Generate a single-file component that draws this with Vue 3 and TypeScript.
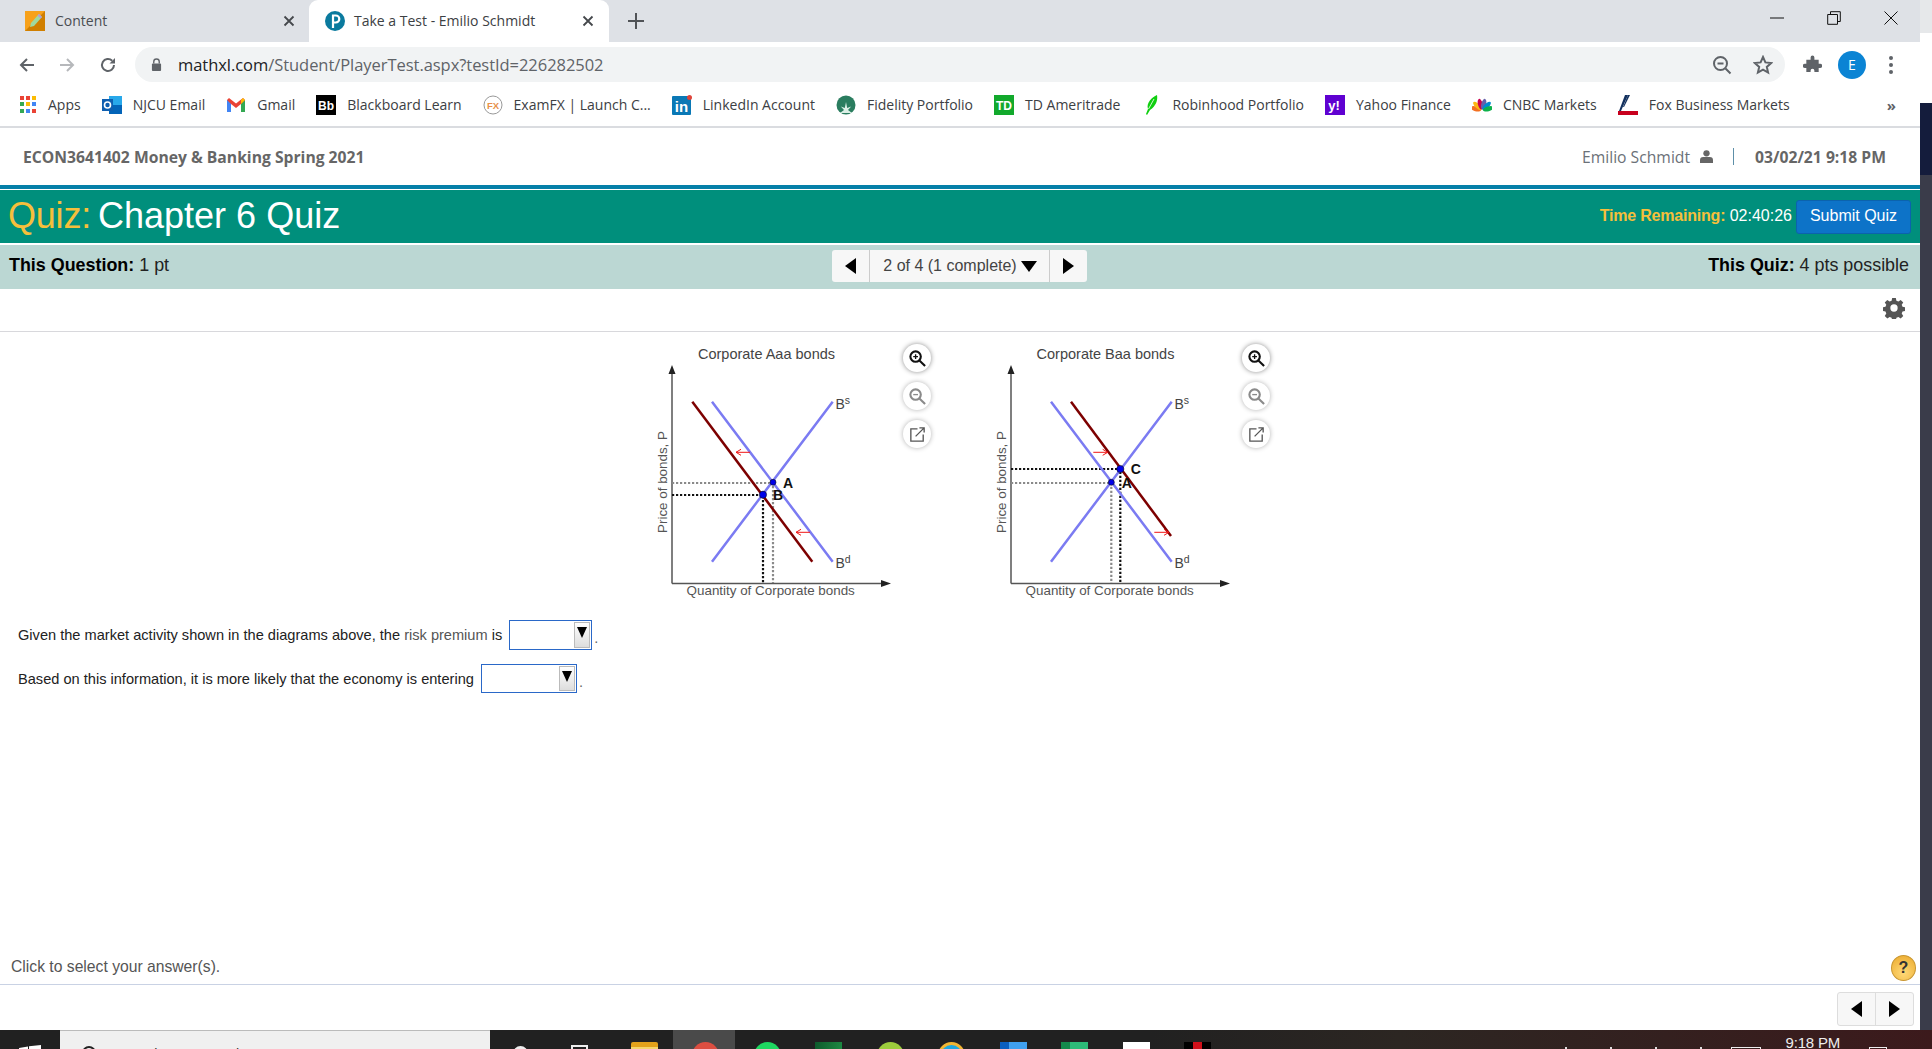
<script setup lang="ts">
interface Bookmark { name: string; icon: string }
interface Dot { x: number; y: number; r: number; label: string; lx: number; ly: number }
interface Chart {
  title: string
  red: number[]
  dots: Dot[]
  arrows: number[][]
  grayY: number
  grayX: number
  blackY: number
  blackX: number
}

const bookmarks: Bookmark[] = [
  { name: 'Apps', icon: 'apps' },
  { name: 'NJCU Email', icon: 'outlook' },
  { name: 'Gmail', icon: 'gmail' },
  { name: 'Blackboard Learn', icon: 'bb' },
  { name: 'ExamFX | Launch C...', icon: 'fx' },
  { name: 'LinkedIn Account', icon: 'in' },
  { name: 'Fidelity Portfolio', icon: 'fidelity' },
  { name: 'TD Ameritrade', icon: 'td' },
  { name: 'Robinhood Portfolio', icon: 'robin' },
  { name: 'Yahoo Finance', icon: 'yahoo' },
  { name: 'CNBC Markets', icon: 'cnbc' },
  { name: 'Fox Business Markets', icon: 'fox' },
]

const appColors = ['#ea4335', '#ea4335', '#fbbc05', '#34a853', '#fbbc05', '#4285f4', '#34a853', '#4285f4', '#ea4335']

const petals = [
  { color: '#f37021', angle: -75 },
  { color: '#fcb711', angle: -45 },
  { color: '#cc004c', angle: -15 },
  { color: '#6460aa', angle: 15 },
  { color: '#0089d0', angle: 45 },
  { color: '#0db14b', angle: 75 },
]

const charts: Chart[] = [
  {
    title: 'Corporate Aaa bonds',
    red: [52.3, 69.7, 172.3, 229.7],
    dots: [
      { x: 133, y: 150.3, r: 3, label: 'A', lx: 148, ly: 156 },
      { x: 123, y: 162.7, r: 3.6, label: 'B', lx: 138, ly: 168 },
    ],
    arrows: [[110, 120.3, 96, 120.3], [170, 200.3, 156, 200.3]],
    grayY: 151,
    grayX: 133,
    blackY: 163,
    blackX: 123,
  },
  {
    title: 'Corporate Baa bonds',
    red: [92, 69.7, 192, 204],
    dots: [
      { x: 132.3, y: 150.3, r: 3, label: 'A', lx: 147.7, ly: 156 },
      { x: 141.3, y: 137, r: 3.6, label: 'C', lx: 156.7, ly: 142 },
    ],
    arrows: [[114.3, 120.3, 128.7, 120.3], [175.3, 200.3, 190, 200.3]],
    grayY: 151,
    grayX: 132.3,
    blackY: 137,
    blackX: 141.3,
  },
]

const questions = [
  { before: 'Given the market activity shown in the diagrams above, the ', term: 'risk premium', after: ' is', cls: 'first' },
  { before: 'Based on this information, it is more likely that the economy is entering', term: '', after: '', cls: 'second' },
]

const taskIcons = ['folder', 'chrome', 'spotify', 'excel', 'lime', 'ie', 'mail', 'sheet', 'steam', 'netflix']
</script>

<template>
  <div class="screen">
    <div class="window">
      <div class="tabstrip">
        <div class="tab">
          <svg class="favicon" viewBox="0 0 20 20">
            <rect width="20" height="20" fill="#f7a11a" />
            <path d="M0 20 20 0v20z" fill="#d07f00" />
            <path d="M5 16l1-4L14 3l3 3-8 9z" fill="#9fd9a0" />
            <path d="M14 3l3 3-1.5 1.6-3-3z" fill="#b79bd6" />
          </svg>
          <span class="tab-title">Content</span>
          <svg class="tab-x" viewBox="0 0 12 12"><path d="M1.5 1.5l9 9M10.500 1.500l-9 9" /></svg>
        </div>
        <div class="tab active">
          <svg class="favicon round" viewBox="0 0 20 20">
            <circle cx="10" cy="10" r="10" fill="#0a7a9e" />
            <path d="M8 17V4.500h2.800a3.500 3.500 0 0 1 0 7H8" fill="none" stroke="#fff" stroke-width="2.200" />
          </svg>
          <span class="tab-title">Take a Test - Emilio Schmidt</span>
          <svg class="tab-x" viewBox="0 0 12 12"><path d="M1.5 1.5l9 9M10.500 1.500l-9 9" /></svg>
        </div>
        <svg class="new-tab" viewBox="0 0 16 16"><path d="M8 0v16M0 8h16" /></svg>
        <div class="win-controls">
          <svg viewBox="0 0 14 14"><path d="M0 7h14" /></svg>
          <svg viewBox="0 0 14 14"><path d="M3.500 3V.7h9.800v9.800H11M.7 3.500h9.800v9.800H.7z" /></svg>
          <svg viewBox="0 0 14 14"><path d="M.5.500l13 13M13.500.5l-13 13" /></svg>
        </div>
      </div>

      <div class="toolbar">
        <svg class="tool back" viewBox="0 0 16 16"><path d="M15 8H2M8 2 2 8l6 6" /></svg>
        <svg class="tool fwd" viewBox="0 0 16 16"><path d="M1 8h13M8 2l6 6-6 6" /></svg>
        <svg class="tool reload" viewBox="0 0 16 16"><path d="M14 8a6 6 0 1 1-1.800-4.300" /><path class="solid" d="M15 1v5.500H9.500z" /></svg>
        <div class="omnibox">
          <svg class="lock" viewBox="0 0 12 14">
            <path d="M3 6V4a3 3 0 0 1 6 0v2" fill="none" stroke="#5f6368" stroke-width="1.500" />
            <rect x="1" y="6" width="10" height="8" rx="1" fill="#5f6368" />
          </svg>
          <span class="url"><b>mathxl.com</b>/Student/PlayerTest.aspx?testId=226282502</span>
          <svg class="omni-icon" viewBox="0 0 20 20">
            <circle cx="8.500" cy="8.500" r="6.500" /><path d="M5.500 8.500h6M13.500 13.500l5 5" />
          </svg>
          <svg class="omni-icon star" viewBox="0 0 20 20">
            <path d="M10 2l2.400 5.400 5.800.6-4.400 3.900 1.300 5.700L10 14.700l-5.100 2.900 1.300-5.700L1.800 8l5.800-.6z" />
          </svg>
        </div>
        <svg class="puzzle" viewBox="0 0 20 20">
          <path d="M8 2.500a2 2 0 0 1 4 0V5h4.500v4.200H18a2.200 2.200 0 0 1 0 4.400h-1.500V18H12v-1.500a2 2 0 0 0-4 0V18H3.500v-4.400H2a2.200 2.200 0 0 1 0-4.400h1.500V5H8z" fill="#5f6368" />
        </svg>
        <div class="avatar">E</div>
        <div class="kebab"><i /><i /><i /></div>
      </div>

      <div class="bookmarks">
        <div v-for="b in bookmarks" :key="b.name" class="bookmark">
          <div v-if="b.icon === 'apps'" class="apps-grid"><i v-for="(c, i) in appColors" :key="i" :style="{ background: c }" /></div>
          <svg v-else class="bm-icon" viewBox="0 0 20 20">
            <template v-if="b.icon === 'outlook'">
              <rect x="7" y="1" width="13" height="18" fill="#28a8ea" />
              <rect x="7" y="10" width="13" height="9" fill="#0364b8" />
              <rect x="0" y="4" width="11" height="12" fill="#0f5fb0" />
              <circle cx="5.500" cy="10" r="3" fill="none" stroke="#fff" stroke-width="1.600" />
            </template>
            <template v-else-if="b.icon === 'gmail'">
              <path d="M1 5v12h4V9l5 4 5-4v8h4V5l-2-2-7 5.500L3 3z" fill="#ea4335" />
              <path d="M1 5v12h4V9z" fill="#4285f4" />
              <path d="M19 5v12h-4V9z" fill="#34a853" />
              <path d="M15 9V5l2-2 2 2z" fill="#fbbc05" />
            </template>
            <template v-else-if="b.icon === 'bb'">
              <rect width="20" height="20" fill="#000" />
              <text x="10" y="14.500" class="fav-text" fill="#fff" font-size="12">Bb</text>
            </template>
            <template v-else-if="b.icon === 'fx'">
              <circle cx="10" cy="10" r="9" fill="#fff" stroke="#999" />
              <text x="10" y="13.500" class="fav-text" fill="#e8914a" font-size="9.500">FX</text>
            </template>
            <template v-else-if="b.icon === 'in'">
              <rect y="1" width="19" height="19" rx="1" fill="#0a78b5" />
              <text x="9.500" y="16.500" class="fav-text" fill="#fff" font-size="15">in</text>
              <circle cx="17.500" cy="2.500" r="2.500" fill="#e0443a" />
            </template>
            <template v-else-if="b.icon === 'fidelity'">
              <circle cx="10" cy="10" r="9.500" fill="#2a7d5f" />
              <path d="M10 7l1.200 6 4-1.500L12 15l4 3H4l4-3-3.200-3.500 4 1.500z" fill="#dcefe6" />
            </template>
            <template v-else-if="b.icon === 'td'">
              <rect width="20" height="20" fill="#12a92c" />
              <text x="10" y="14.500" class="fav-text" fill="#fff" font-size="12">TD</text>
            </template>
            <template v-else-if="b.icon === 'robin'">
              <path d="M16 0c1 5-1 11-7 15l-3 5-1-1 2-5C5 8 11 2 16 0z" fill="#10cf10" />
              <path d="M13 4 7.500 14" stroke="#fff" stroke-width=".8" />
            </template>
            <template v-else-if="b.icon === 'yahoo'">
              <rect width="20" height="20" fill="#5f01d1" />
              <text x="9" y="15" class="fav-text" fill="#fff" font-size="13">y!</text>
            </template>
            <template v-else-if="b.icon === 'cnbc'">
              <ellipse
                v-for="p in petals"
                :key="p.color"
                cx="10"
                cy="9"
                rx="2.400"
                ry="5.500"
                :fill="p.color"
                :transform="`rotate(${p.angle} 10 15.500)`"
              />
            </template>
            <template v-else>
              <path d="M1 16 7 0h3L3 16z" fill="#12305e" />
              <path d="M5 12 10 0h2L6 12z" fill="#12305e" />
              <rect y="16" width="20" height="4" fill="#c8001e" />
            </template>
          </svg>
          <span>{{ b.name }}</span>
        </div>
        <span class="more">»</span>
      </div>

      <div class="course">
        <span class="course-name">ECON3641402 Money &amp; Banking Spring 2021</span>
        <div class="user">
          <span class="user-name">Emilio Schmidt</span>
          <svg class="person" viewBox="0 0 14 14">
            <circle cx="7" cy="3.600" r="3.400" />
            <path d="M0 14v-3a3.500 3.500 0 0 1 3.500-3.500h7A3.500 3.500 0 0 1 14 11v3z" />
          </svg>
          <span class="sep" />
          <b class="stamp">03/02/21 9:18 PM</b>
        </div>
      </div>

      <div class="blue-rule" />
      <div class="quiz-bar">
        <h1><span>Quiz:</span> Chapter 6 Quiz</h1>
        <div class="timer">
          <span class="remaining"><b>Time Remaining:</b> 02:40:26</span>
          <button class="submit">Submit Quiz</button>
        </div>
      </div>

      <div class="info-bar">
        <div class="info-left"><b>This Question:</b> 1 pt</div>
        <div class="pager">
          <div class="pager-btn"><i class="tri left" /></div>
          <div class="pager-mid">2 of 4 (1 complete) <i class="tri down" /></div>
          <div class="pager-btn"><i class="tri right" /></div>
        </div>
        <div class="info-right"><b>This Quiz:</b> 4 pts possible</div>
      </div>

      <div class="gear-row">
        <svg class="gear" viewBox="0 0 24 24">
          <path d="M10 1h4l.6 3 2.200.9 2.500-1.700 2.800 2.800-1.700 2.500.9 2.200 3 .6v4l-3 .6-.9 2.200 1.700 2.500-2.800 2.800-2.500-1.700-2.200.9-.6 3h-4l-.6-3-2.200-.9-2.500 1.700-2.800-2.800 1.700-2.500-.9-2.200-3-.6v-4l3-.6.9-2.200-1.700-2.500 2.800-2.800 2.500 1.700 2.200-.9zM12 8a4 4 0 1 0 0 8 4 4 0 0 0 0-8z" fill="#555" fill-rule="evenodd" />
        </svg>
      </div>

      <div class="content">
        <div class="figures">
          <div v-for="c in charts" :key="c.title" class="figure">
            <svg class="chart" viewBox="0 0 255 270" width="255" height="270">
              <text x="126.500" y="27.300" class="title">{{ c.title }}</text>
              <path d="M32 251.500V36M32 251.500H247" class="axis" />
              <path d="M32 33l-3.500 9h7zM251 251.500l-10-3.500v7z" fill="#222" />
              <path :d="`M32 ${c.grayY}H${c.grayX}V251`" class="dots gray" />
              <path :d="`M32 ${c.blackY}H${c.blackX}V251`" class="dots black" />
              <path d="M72 69.700 192.700 229.700M72 229.700 192.700 69.700" class="curve blue" />
              <line :x1="c.red[0]" :y1="c.red[1]" :x2="c.red[2]" :y2="c.red[3]" class="curve red" />
              <g v-for="(a, i) in c.arrows" :key="i" class="shift">
                <line :x1="a[0]" :y1="a[1]" :x2="a[2]" :y2="a[3]" />
                <path :d="`M${a[2] + (a[2] > a[0] ? -5 : 5)} ${a[3] - 3}L${a[2]} ${a[3]}L${a[2] + (a[2] > a[0] ? -5 : 5)} ${a[3] + 3}`" />
              </g>
              <g v-for="d in c.dots" :key="d.label">
                <circle :cx="d.x" :cy="d.y" :r="d.r" class="dot" />
                <text :x="d.lx" :y="d.ly" class="pt-label">{{ d.label }}</text>
              </g>
              <text x="195.500" y="77" class="curve-label">B<tspan dy="-5" font-size="10.500">s</tspan></text>
              <text x="195.500" y="236" class="curve-label">B<tspan dy="-5" font-size="10.500">d</tspan></text>
              <text x="130.700" y="263" class="axis-label">Quantity of Corporate bonds</text>
              <text transform="translate(26.500 150) rotate(-90)" class="axis-label">Price of bonds, P</text>
            </svg>
            <div class="tools">
              <button class="round-btn">
                <svg viewBox="0 0 20 20"><circle cx="8" cy="8" r="5.500" /><path d="M12 12l6 6" /><path class="thin" d="M5.500 8h5M8 5.500v5" /></svg>
              </button>
              <button class="round-btn muted">
                <svg viewBox="0 0 20 20"><circle cx="8" cy="8" r="5.500" /><path d="M12 12l6 6" /><path class="thin" d="M5.500 8h5" /></svg>
              </button>
              <button class="round-btn muted dark">
                <svg viewBox="0 0 20 20"><path class="thin" d="M10 4H3v13h13v-7" /><path class="thin" d="M8 12 17 3M12 3h5v5" /></svg>
              </button>
            </div>
          </div>
        </div>

        <p v-for="q in questions" :key="q.cls" class="question" :class="q.cls">
          {{ q.before }}<span v-if="q.term" class="term">{{ q.term }}</span>{{ q.after }}
          <span class="combo"><span class="combo-btn"><i class="tri small" /></span></span><span class="period">.</span>
        </p>
      </div>

      <div class="status">
        <span>Click to select your answer(s).</span>
        <div class="help">?</div>
      </div>
      <div class="foot">
        <div class="foot-nav">
          <div><i class="tri left" /></div>
          <div><i class="tri right" /></div>
        </div>
      </div>
    </div>

    <div class="desktop-edge"><i class="edge-strip" /><i class="edge-top" /><i class="edge-navy" /></div>

    <div class="taskbar">
      <div class="start"><svg viewBox="0 0 22 22"><path d="M0 3l9-1.500V10H0zM10 1.300 22 0v10H10z" fill="#fff" /></svg></div>
      <div class="search-box"><i class="search-ring" /><span>Type here to search</span></div>
      <div class="task-cortana"><i /></div>
      <div class="task-view"><i /></div>
      <div v-for="t in taskIcons" :key="t" class="task" :class="t"><i /></div>
      <div class="tray">
        <i class="tray-mark" /><i class="tray-mark" /><i class="tray-mark" /><i class="tray-mark" />
        <i class="tray-box" />
        <span class="clock">9:18 PM</span>
        <i class="tray-note" />
      </div>
    </div>
  </div>
</template>

<style>
html, body { margin: 0; background: #fff; overflow: hidden; }
</style>

<style scoped>
* { box-sizing: border-box; }
.screen {
  width: 1932px;
  height: 1049px;
  display: grid;
  grid-template-columns: 1920px 12px;
  grid-template-rows: 1030px 19px;
  overflow: hidden;
  font-family: "Liberation Sans", Arial, sans-serif;
  background: #fff;
}
.window { display: flex; flex-direction: column; height: 1030px; overflow: hidden; background: #fff; }

/* tabs */
.tabstrip { display: flex; align-items: stretch; height: 42px; background: #dee1e6; flex: none; }
.tab { width: 284px; margin-left: 25px; display: flex; align-items: center; font: 14px "Open Sans", sans-serif; color: #4a4d51; padding-bottom: 1px; }
.tab.active { width: 300px; margin-left: 0; background: #fff; border-radius: 9px 9px 0 0; padding-left: 16px; color: #3c4043; }
.favicon { width: 20px; height: 20px; flex: none; margin-right: 10px; }
.favicon.round { margin-right: 9px; }
.tab-title { flex: 1; white-space: nowrap; }
.tab-x { width: 12px; height: 12px; fill: none; stroke: #45484c; stroke-width: 1.800; margin-right: 14px; }
.tab.active .tab-x { margin-right: 15px; }
.new-tab { width: 16px; height: 16px; align-self: center; margin-left: 19px; stroke: #505357; stroke-width: 2; fill: none; }
.win-controls { margin-left: auto; display: flex; align-items: flex-start; gap: 43px; padding: 11px 22px 0 0; }
.win-controls svg { width: 14px; height: 14px; fill: none; stroke: #111; stroke-width: 1; }

/* toolbar */
.toolbar { display: flex; align-items: center; height: 45px; padding-left: 19px; flex: none; background: #fff; }
.tool { width: 16px; height: 16px; fill: none; stroke: #5f6368; stroke-width: 2; margin-right: 24px; flex: none; }
.tool.fwd { stroke: #b6b8bb; margin-right: 25px; }
.tool .solid { fill: #5f6368; stroke: none; }
.tool.reload { margin-right: 19px; }
.omnibox { width: 1650px; height: 35px; background: #f1f3f4; border-radius: 18px; display: flex; align-items: center; padding-left: 16px; flex: none; }
.lock { width: 11px; height: 13px; margin-right: 16px; flex: none; }
.url { font: 16.500px "Open Sans", sans-serif; color: #5f6368; flex: 1; white-space: nowrap; letter-spacing: -.05px; }
.url b { font-weight: 400; color: #202124; }
.omni-icon { width: 20px; height: 20px; fill: none; stroke: #5f6368; stroke-width: 2; flex: none; margin-right: 21px; }
.omni-icon.star { margin-right: 12px; }
.puzzle { width: 19px; height: 19px; margin-left: 18px; flex: none; }
.avatar { width: 28px; height: 28px; border-radius: 50%; background: #0b84d4; color: #fff; font: 14px "Open Sans", sans-serif; display: flex; align-items: center; justify-content: center; margin-left: 16px; flex: none; }
.kebab { display: flex; flex-direction: column; gap: 3px; margin-left: 23px; }
.kebab i { width: 4px; height: 4px; border-radius: 50%; background: #5f6368; display: block; }

/* bookmarks */
.bookmarks { height: 41px; display: flex; align-items: center; padding: 0 0 4px 20px; border-bottom: 2px solid #dadce0; flex: none; }
.bookmark { display: flex; align-items: center; gap: 11px; margin-right: 21px; font: 14px "Open Sans", sans-serif; color: #3c4043; white-space: nowrap; }
.bm-icon { width: 20px; height: 20px; flex: none; }
.fav-text { font-family: "Liberation Sans", sans-serif; font-weight: 700; text-anchor: middle; }
.apps-grid { width: 17px; height: 17px; display: grid; grid-template-columns: repeat(3, 4px); gap: 2px; flex: none; }
.apps-grid i { display: block; height: 4px; }
.more { margin-left: auto; margin-right: 24px; font: 700 15px "Open Sans", sans-serif; color: #5f6368; }

/* course header */
.course { height: 57px; display: flex; justify-content: space-between; align-items: center; padding: 0 34px 0 23px; flex: none; }
.course-name { font: 700 15.700px "Open Sans", sans-serif; color: #666; white-space: nowrap; }
.user { display: flex; align-items: center; font: 15.700px "Open Sans", sans-serif; color: #6b7178; }
.person { width: 13px; height: 13px; margin-left: 10px; fill: #666; }
.sep { width: 1px; height: 17px; background: #5d8fa8; margin: 0 21px 0 20px; }
.stamp { font-weight: 700; color: #666; }

/* quiz bar */
.blue-rule { height: 4px; background: #047fa8; flex: none; margin-bottom: 1px; }
.quiz-bar { height: 53px; background: #008f7c; display: flex; justify-content: space-between; align-items: center; padding: 0 9px 0 8px; color: #fff; flex: none; }
.quiz-bar h1 { margin: 0 0 1px; font-size: 36px; font-weight: 400; line-height: 1; white-space: nowrap; }
.quiz-bar h1 span { color: #f6bf3b; margin-right: -3px; letter-spacing: -.2px; }
.timer { display: flex; align-items: center; font-size: 16px; }
.remaining { margin-bottom: 2px; white-space: nowrap; }
.timer b { color: #f6bf3b; letter-spacing: -.2px; }
.submit { width: 115px; height: 34px; margin-left: 4px; background: #0d73c8; color: #fff; border: 1px solid #0b63ad; border-radius: 3px; font: 16px "Liberation Sans", sans-serif; padding: 0 0 2px; }

/* info bar */
.info-bar { height: 44px; margin-top: 2px; background: #bbd7d3; display: grid; grid-template-columns: 1fr auto 1fr; align-items: center; font-size: 17.900px; color: #222; padding: 0 11px 2px 9px; flex: none; }
.info-bar b { color: #000; }
.info-left, .info-right { margin-bottom: 2px; }
.info-right { text-align: right; }
.pager { display: flex; height: 32px; background: #f7f7f7; border-radius: 3px; color: #444; font-size: 16px; }
.pager-btn { width: 37px; display: flex; align-items: center; justify-content: center; }
.pager-mid { width: 181px; display: flex; align-items: center; justify-content: center; gap: 4px; padding-left: 2px; border-left: 1px solid #ccc; border-right: 1px solid #ccc; white-space: nowrap; }
.tri { display: block; width: 0; height: 0; flex: none; }
.tri.left { border-top: 8px solid transparent; border-bottom: 8px solid transparent; border-right: 11px solid #000; }
.tri.right { border-top: 8px solid transparent; border-bottom: 8px solid transparent; border-left: 11px solid #000; }
.tri.down { border-left: 8px solid transparent; border-right: 8px solid transparent; border-top: 11px solid #000; }
.tri.small { border-left: 5px solid transparent; border-right: 5px solid transparent; border-top: 11px solid #000; }

.gear-row { height: 43px; border-bottom: 1px solid #d8d8dc; display: flex; align-items: center; justify-content: flex-end; padding-right: 15px; flex: none; }
.gear { width: 22px; height: 22px; margin-top: -5px; }

/* content */
.content { flex: 1; min-height: 0; }
.figures { display: flex; gap: 48px; padding-left: 640px; height: 270px; }
.figure { display: flex; gap: 8px; }
.chart { display: block; flex: none; }
.title { font: 14.500px "Liberation Sans", sans-serif; fill: #444; text-anchor: middle; }
.axis-label { font: 13.400px "Liberation Sans", sans-serif; fill: #555; text-anchor: middle; }
.axis { stroke: #555; stroke-width: 1.500; fill: none; }
.dots { fill: none; stroke-width: 2.200; stroke-dasharray: 2.200 1.800; }
.dots.gray { stroke: #8a8a8a; }
.dots.black { stroke: #111; }
.curve { stroke-width: 2.500; fill: none; }
.curve.blue { stroke: #7b7bf2; }
.curve.red { stroke: #7d0000; }
.shift line, .shift path { stroke: #f01414; stroke-width: 1; fill: none; }
.dot { fill: #0000e8; stroke: #111; stroke-width: .6; }
.pt-label { font: 700 14px "Liberation Sans", sans-serif; fill: #111; text-anchor: middle; }
.curve-label { font: 14px "Liberation Sans", sans-serif; fill: #444; }
.tools { display: flex; flex-direction: column; gap: 10px; padding-top: 12px; }
.round-btn { width: 28px; height: 28px; padding: 0; border: 0; border-radius: 50%; background: #fff; box-shadow: 0 0 5px rgba(0, 0, 0, .45); display: flex; align-items: center; justify-content: center; }
.round-btn svg { width: 19px; height: 19px; fill: none; stroke: #111; stroke-width: 2.200; }
.round-btn .thin { stroke-width: 1.400; }
.round-btn.muted { box-shadow: 0 0 5px rgba(0, 0, 0, .3); }
.round-btn.muted svg { stroke: #8a8a8a; }
.round-btn.dark svg { stroke: #555; }

.question { margin: 0; display: flex; align-items: center; font-size: 14.600px; color: #222; white-space: pre; padding-left: 18px; }
.question.first { margin-top: 18px; height: 30px; }
.question.second { margin-top: 14px; height: 29px; }
.term { color: #555; }
.combo { display: flex; justify-content: flex-end; align-items: center; height: 100%; margin-left: 3px; border: 1px solid #2a68c8; background: #fff; padding: 1px; }
.first .combo { width: 83px; }
.second .combo { width: 96px; }
.combo-btn { width: 16px; height: 100%; max-height: 26px; background: linear-gradient(#fff, #ddd); border: 1px solid #bbb; display: flex; align-items: flex-start; justify-content: center; padding-top: 4px; }
.period { color: #666; margin-left: 2px; padding-top: 6px; }

/* footer */
.status { height: 45px; display: flex; align-items: center; justify-content: space-between; padding: 10px 4px 0 11px; font-size: 15.700px; color: #555; border-bottom: 1px solid #c9d2e4; flex: none; }
.help { width: 25px; height: 26px; margin-top: 2px; border-radius: 50%; background: radial-gradient(circle at 50% 70%, #ffd978, #eba92b); border: 1px solid #c9962f; font: 700 16px "Liberation Sans", sans-serif; color: #333; display: flex; align-items: center; justify-content: center; }
.foot { height: 45px; display: flex; justify-content: flex-end; padding: 7px 6px 0 0; flex: none; }
.foot-nav { display: flex; width: 77px; height: 34px; background: #f7f7f7; border: 1px solid #ddd; border-radius: 3px; }
.foot-nav div { flex: 1; display: flex; align-items: center; justify-content: center; }
.foot-nav div + div { border-left: 1px solid #ddd; }

/* edge of the desktop behind the browser */
.desktop-edge { background: #3a3c4a; display: flex; flex-direction: column; }
.edge-strip { display: block; height: 33px; background: #e6e8ea; }
.edge-top { display: block; height: 70px; background: #fff; }
.edge-navy { display: block; height: 72px; background: #141c3c; }

/* taskbar */
.taskbar { grid-column: 1 / 3; height: 19px; overflow: hidden; display: flex; background: linear-gradient(90deg, #212121 0 1150px, #2c2622 1400px, #3c1a1c 100%); }
.start { width: 60px; padding: 15px 0 0 19px; flex: none; }
.start svg { width: 22px; height: 22px; display: block; }
.search-box { width: 430px; height: 40px; background: #f0f0f0; border-top: 1px solid #bbb; padding: 15px 0 0 22px; display: flex; font: 14px "Liberation Sans", sans-serif; color: #333; flex: none; }
.search-ring { width: 14px; height: 14px; border: 2px solid #222; border-radius: 50%; margin-right: 24px; flex: none; }
.task-cortana { width: 60px; flex: none; padding: 16px 0 0 23px; }
.task-cortana i { display: block; width: 15px; height: 15px; border: 3px solid #eee; border-radius: 50%; }
.task-view { width: 61.500px; flex: none; padding: 15px 0 0 21px; }
.task-view i { display: block; width: 17px; height: 8px; border: 2px solid #eee; }
.task { width: 61.500px; flex: none; padding: 12px 0 0 19px; }
.task i { display: block; width: 27px; height: 27px; }
.task.folder i { background: linear-gradient(#e3a21a 0 5px, #f6d66c 5px); border-radius: 2px 2px 0 0; }
.task.chrome { background: #4a4a4a; }
.task.chrome i { background: #dc4e41; border-radius: 50%; }
.task.spotify i { background: #1ed760; border-radius: 50%; }
.task.excel i { background: linear-gradient(100deg, #0e5a2c, #1f8f45); }
.task.lime i { background: #9ccc3c; border-radius: 50%; }
.task.ie i { background: #1ea7e1; border-radius: 50%; border: 3px solid #f2b632; }
.task.mail i { background: linear-gradient(90deg, #0a5fc0 0 9px, #40a0f0 9px); }
.task.sheet i { background: linear-gradient(90deg, #13894b 0 9px, #2dbb78 9px); }
.task.steam i { background: radial-gradient(circle at 50% 60%, #2c3a4f 0 5px, #fff 5.500px); }
.task.netflix i { background: linear-gradient(90deg, #000 0 9px, #d0101a 9px 18px, #000 18px); }
.tray { margin-left: auto; display: flex; align-items: flex-start; color: #eee; font: 15px "Liberation Sans", sans-serif; padding-right: 45px; }
.tray-mark { display: block; width: 2px; height: 3px; background: #ddd; margin: 17px 43px 0 0; }
.tray-box { width: 30px; height: 20px; border: 1px solid #eee; margin: 17px 25px 0 -14px; }
.clock { margin-top: 4px; white-space: nowrap; letter-spacing: -.2px; }
.tray-note { width: 18px; height: 18px; border: 1px solid #eee; margin: 17px 0 0 29px; }
</style>
